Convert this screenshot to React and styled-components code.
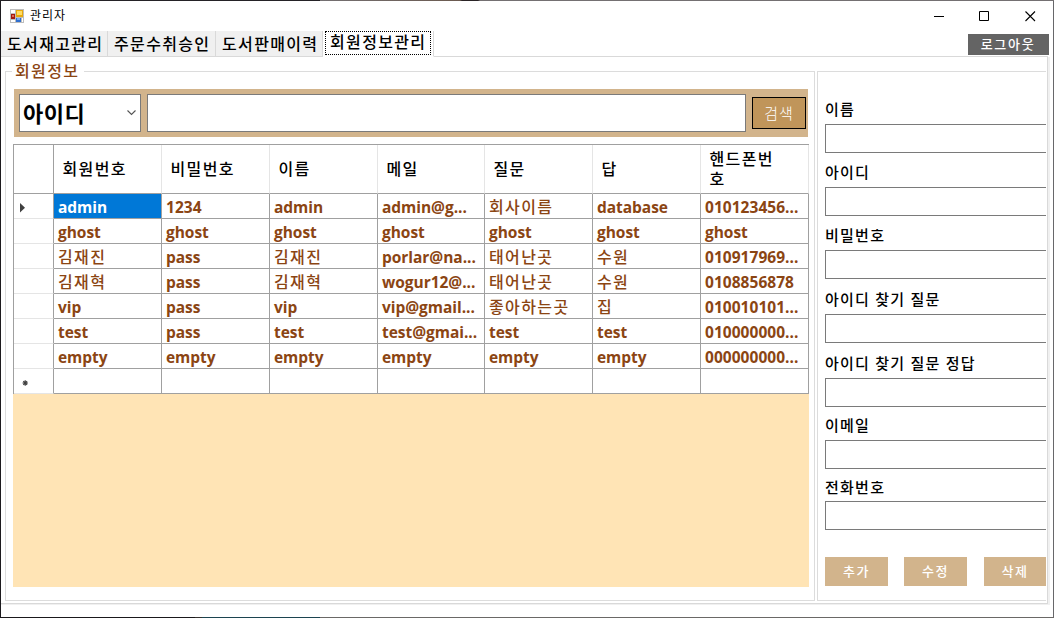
import React from "react";
import styled, { createGlobalStyle } from "styled-components";

const Global = createGlobalStyle`
  *, *::before, *::after { box-sizing: border-box; }
  body { margin: 0; overflow: hidden; }
  button { margin: 0; padding: 0; border: 0; background: none; font: inherit; color: inherit; }
  input { margin: 0; padding: 0 6px; border-radius: 0; outline: 0; font: inherit; }
`;

const Frame = styled.div`
  width: 1054px;
  height: 618px;
  padding: 1px;
  font-family: "Open Sans", "Noto Sans CJK KR", sans-serif;
  font-size: 16px;
  color: #000;
  background:
    linear-gradient(90deg, #242226 320px, #747072 320px, #6b5a50 460px, #2a2426 462px, #2a2426 478px, #747072 480px) top / 100% 1px no-repeat,
    linear-gradient(90deg, #1a181b 195px, #35312f 195px, #35312f 202px, #1c4450 202px, #1c4450 320px, #6a6866 320px) bottom / 100% 1px no-repeat,
    linear-gradient(90deg, #1c1a1e 1px, #67676a 1px);
`;

const Window = styled.div`
  display: flex;
  flex-direction: column;
  width: 1052px;
  height: 616px;
  background: #fff;
`;

const Text = styled.span`
  display: block;
  white-space: pre;
  font-size: ${(p) => p.$size || 16}px;
  font-weight: ${(p) => p.$weight || 500};
  letter-spacing: ${(p) => p.$spacing || 0}px;
  line-height: 20px;
`;

const TitleBar = styled.header`
  display: flex;
  align-items: center;
  height: 30px;
  padding-left: 9px;
`;

const Title = styled(Text)`
  flex: 1;
  margin-left: 6px;
`;

const CaptionButton = styled.button`
  display: flex;
  align-items: center;
  justify-content: center;
  width: 45.5px;
  height: 28px;
`;

const TabStrip = styled.nav`
  display: flex;
  height: 26px;
`;

const Tab = styled.button`
  display: flex;
  align-items: center;
  justify-content: flex-start;
  width: ${(p) => p.$width}px;
  height: 26px;
  padding-left: 6px;
  background: #f0f0f0;
  border-right: 1px solid #d9d9d9;
  border-bottom: 1px solid #d9d9d9;
`;

const ActiveTab = styled(Tab)`
  align-items: flex-start;
  padding-left: 2px;
  background: #fff;
  border-bottom-color: #fff;
`;

const FocusRect = styled.span`
  display: flex;
  align-items: center;
  width: 106px;
  height: 24px;
  padding: 0 0 2px 4px;
  border: 1px dotted #000;
`;

const StripRest = styled.div`
  display: flex;
  flex: 1;
  justify-content: flex-end;
  padding: 3px 4px 0 0;
  background: linear-gradient(#d9d9d9, #d9d9d9) left bottom / 614px 1px no-repeat;
`;

const Logout = styled.button`
  display: flex;
  align-items: center;
  justify-content: center;
  width: 81px;
  height: 21px;
  padding: 0 1px 2px 0;
  background: #646464;
  color: #fff;
`;

const Page = styled.main`
  display: flex;
  width: 1049px;
  height: 548px;
  padding: 6px 0 0 4px;
  border-right: 2px solid #f0f0f0;
  border-bottom: 1px solid #f0f0f0;
  box-shadow: inset -1px -1px #d9d9d9;
`;

const Members = styled.fieldset`
  width: 810px;
  height: 538px;
  min-width: 0;
  margin: 0;
  padding: 9px 0 0 8px;
  border: 1px solid #dcdcdc;
`;

const MembersLegend = styled.legend`
  height: 17px;
  margin-left: -2px;
  padding: 0 5px 0 3px;
  color: #8b4513;
  line-height: 16px;

  ${Text} {
    margin-top: -2px;
  }
`;

const SearchBar = styled.div`
  display: flex;
  align-items: center;
  width: 794px;
  height: 48px;
  padding: 0 2px 0 5px;
  background: #d2b48c;
`;

const Combo = styled.div`
  display: flex;
  align-items: center;
  justify-content: space-between;
  width: 122px;
  height: 38px;
  padding: 0 4px 0 3px;
  border: 1px solid #7a7a7a;
  background: #fff;
`;

const SearchInput = styled.input`
  width: 599px;
  height: 38px;
  margin: 0 6px;
  border: 1px solid #7a7a7a;
`;

const SearchButton = styled.button`
  display: flex;
  flex-shrink: 0;
  align-items: center;
  justify-content: center;
  width: 54px;
  height: 32px;
  border: 1px solid #000;
  background: #c0955a;
  color: #fff;
`;

const GridBox = styled.section`
  width: 796px;
  height: 443px;
  margin: 7px 0 0 -1px;
  background: #ffe4b5;
`;

const GridRow = styled.div`
  display: grid;
  grid-template-columns: 40px 108px 108px 108px 107px 108px 108px 108px;
  width: 796px;
  height: ${(p) => (p.$header ? 50 : 25)}px;
  border-left: 1px solid #a0a0a0;
  border-top: ${(p) => (p.$header ? "1px solid #a0a0a0" : "0")};
  background: #fff;
`;

const RowHead = styled.div`
  display: flex;
  align-items: center;
  padding: 4px 0 0 5px;
  border-right: 1px solid #a0a0a0;
  border-bottom: 1px solid ${(p) => (p.$header ? "#a0a0a0" : "#e5e5e5")};
`;

const HeadCell = styled.div`
  display: flex;
  flex-direction: column;
  justify-content: center;
  padding: 0 0 0 8.5px;
  border-right: 1px solid #e5e5e5;
  border-bottom: 1px solid #a0a0a0;
`;

const Cell = styled.div`
  display: flex;
  align-items: center;
  min-width: 0;
  padding: 2px 0 0 4px;
  border-right: 1px solid #a0a0a0;
  border-bottom: 1px solid #a0a0a0;
  background: ${(p) => (p.$selected ? "#0078d7" : "#fff")};
  color: ${(p) => (p.$selected ? "#fff" : "#8b4513")};
`;

const Detail = styled.aside`
  display: flex;
  flex-direction: column;
  width: 229px;
  height: 530px;
  margin: 8px 0 0 2px;
  padding: 18px 0 0 7px;
  border: 1px solid #dcdcdc;
  border-right: 0;
`;

const Field = styled.label`
  display: flex;
  flex-direction: column;
  justify-content: flex-end;
  height: ${(p) => p.$height}px;
`;

const FieldInput = styled.input`
  width: 221px;
  height: 29px;
  margin-top: ${(p) => p.$gap}px;
  border: 1px solid #7a7a7a;
  border-right: 0;
`;

const Actions = styled.div`
  display: flex;
  gap: 16px;
  margin-top: 27px;
`;

const Action = styled.button`
  display: flex;
  align-items: center;
  justify-content: center;
  width: ${(p) => p.$width}px;
  height: 29px;
  margin-left: ${(p) => p.$shift || 0}px;
  padding-bottom: 2px;
  background: #d2b48c;
  color: #fff;
`;

const AppIcon = () => (
  <svg width="14" height="14" viewBox="0 0 14 14" shapeRendering="crispEdges">
    <path d="M0 0h14v14H0z" fill="#bdbdbd" />
    <path d="M1 1h4v3H1zM1 11h4v2H1zM12 9h1v4h-1z" fill="#fff" />
    <path d="M6 1h7v7H6z" fill="#e8a90c" />
    <path d="M7 2h5v4H7z" fill="#ffdc62" />
    <path d="M1 5h4v5H1z" fill="#a5190f" />
    <path d="M2 6h2v2H2z" fill="#e06a55" />
    <path d="M6 9h5v4H6z" fill="#2f6fd0" />
    <path d="M7 9h3v2H7z" fill="#79aaf0" />
  </svg>
);

const members = [
  ["admin", "1234", "admin", "admin@g...", "회사이름", "database", "010123456..."],
  ["ghost", "ghost", "ghost", "ghost", "ghost", "ghost", "ghost"],
  ["김재진", "pass", "김재진", "porlar@na...", "태어난곳", "수원", "010917969..."],
  ["김재혁", "pass", "김재혁", "wogur12@...", "태어난곳", "수원", "0108856878"],
  ["vip", "pass", "vip", "vip@gmail...", "좋아하는곳", "집", "010010101..."],
  ["test", "pass", "test", "test@gmai...", "test", "test", "010000000..."],
  ["empty", "empty", "empty", "empty", "empty", "empty", "000000000..."],
  ["", "", "", "", "", "", ""],
];

const columns = [["회원번호"], ["비밀번호"], ["이름"], ["메일"], ["질문"], ["답"], ["핸드폰번", "호"]];

const fields = [
  ["이름", 63, 5],
  ["아이디", 63, 5],
  ["비밀번호", 63, 5],
  ["아이디 찾기 질문", 64, 5],
  ["아이디 찾기 질문 정답", 64, 5],
  ["이메일", 62, 5],
  ["전화번호", 61, 4],
];

function CellText({ children }) {
  if (/[가-힣]/.test(children)) return <Text $spacing={1.4}>{children}</Text>;
  const numeric = /^\d/.test(children);
  return (
    <Text $weight={700} $size={15.5} $spacing={numeric ? 0.04 : -0.04}>
      {children}
    </Text>
  );
}

export default function App() {
  return (
    <Frame>
      <Global />
      <Window>
        <TitleBar>
          <AppIcon />
          <Title $size={12} $weight={400} $spacing={0.9}>관리자</Title>
          <CaptionButton>
            <svg width="11" height="11"><path d="M0 5.5h10" stroke="#000" /></svg>
          </CaptionButton>
          <CaptionButton>
            <svg width="11" height="11"><path d="M.5.5h9v9h-9z" fill="none" stroke="#000" /></svg>
          </CaptionButton>
          <CaptionButton>
            <svg width="11" height="11"><path d="M.5.5l9.5 9.5M10 .5L.5 10" stroke="#000" strokeWidth="1.1" /></svg>
          </CaptionButton>
        </TitleBar>
        <TabStrip>
          <Tab $width={107}><Text $spacing={1.35}>도서재고관리</Text></Tab>
          <Tab $width={108}><Text $spacing={1.35}>주문수취승인</Text></Tab>
          <Tab $width={107}><Text $spacing={1.35}>도서판매이력</Text></Tab>
          <ActiveTab $width={111}>
            <FocusRect><Text $spacing={1.35}>회원정보관리</Text></FocusRect>
          </ActiveTab>
          <StripRest>
            <Logout><Text $size={13} $spacing={1.7}>로그아웃</Text></Logout>
          </StripRest>
        </TabStrip>
        <Page>
          <Members>
            <MembersLegend><Text $spacing={1.35}>회원정보</Text></MembersLegend>
            <SearchBar>
              <Combo>
                <Text $size={22} $weight={700} $spacing={0.5}>아이디</Text>
                <svg width="9" height="6"><path d="M.5.5l4 4 4-4" fill="none" stroke="#555" strokeWidth="1.1" /></svg>
              </Combo>
              <SearchInput />
              <SearchButton><Text $size={15} $weight={300} $spacing={0.9}>검색</Text></SearchButton>
            </SearchBar>
            <GridBox>
              <GridRow $header>
                <RowHead $header />
                {columns.map((lines) => (
                  <HeadCell key={lines[0]}>
                    {lines.map((line) => <Text key={line} $spacing={1.4}>{line}</Text>)}
                  </HeadCell>
                ))}
              </GridRow>
              {members.map((row, r) => (
                <GridRow key={r}>
                  <RowHead>
                    {r === 0 && <svg width="6" height="10"><path d="M1 0v9.5L6 4.8z" fill="#404040" /></svg>}
                    {r === 7 && (
                      <svg width="12" height="8"><path d="M3.5 4h5.5M6.2 1.200v5.600M4.300 2.100l3.800 3.800M8.100 2.100L4.300 5.900" stroke="#404040" strokeWidth="1.2" /></svg>
                    )}
                  </RowHead>
                  {row.map((value, c) => (
                    <Cell key={c} $selected={r === 0 && c === 0}>
                      <CellText>{value}</CellText>
                    </Cell>
                  ))}
                </GridRow>
              ))}
            </GridBox>
          </Members>
          <Detail>
            {fields.map(([label, height, gap]) => (
              <Field key={label} $height={height}>
                <Text $size={15} $spacing={1.25}>{label}</Text>
                <FieldInput $gap={gap} />
              </Field>
            ))}
            <Actions>
              <Action $width={63}><Text $size={13} $spacing={1.5}>추가</Text></Action>
              <Action $width={63}><Text $size={13} $spacing={1.5}>수정</Text></Action>
              <Action $width={62} $shift={1}><Text $size={13} $spacing={1.5}>삭제</Text></Action>
            </Actions>
          </Detail>
        </Page>
      </Window>
    </Frame>
  );
}
